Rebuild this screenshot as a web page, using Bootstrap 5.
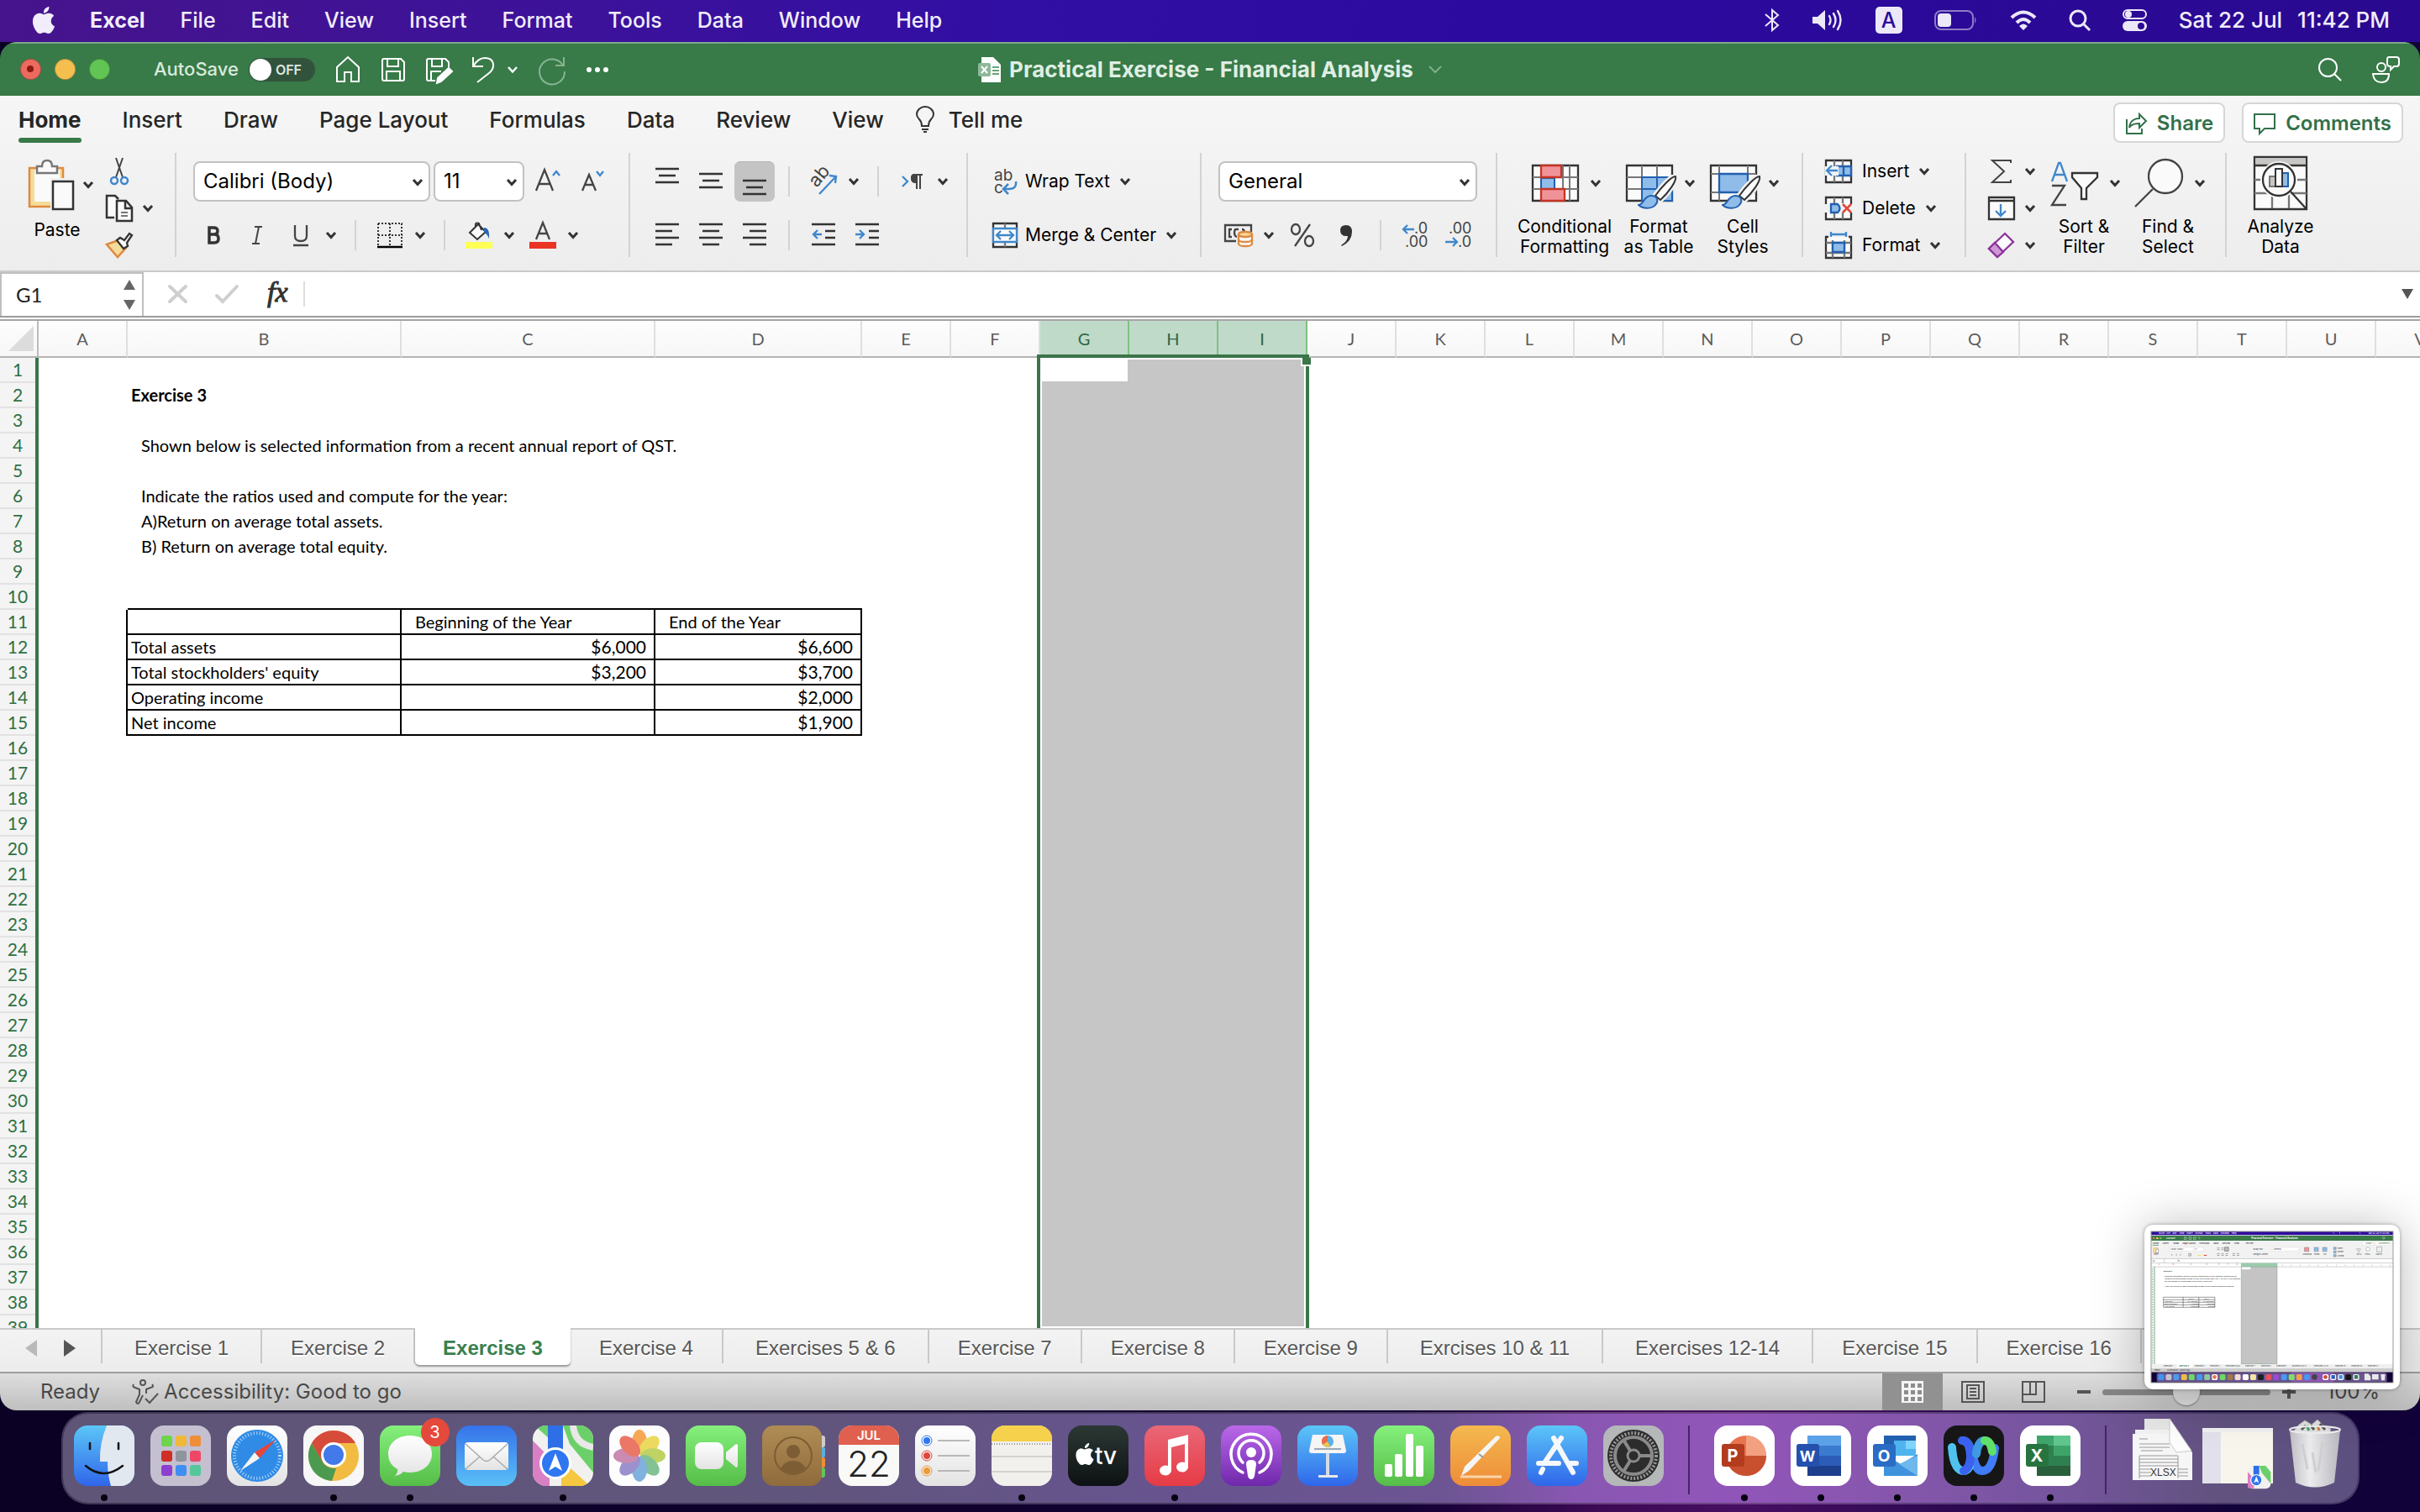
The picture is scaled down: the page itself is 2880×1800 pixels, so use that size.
<!DOCTYPE html>
<html lang="en">
<head>
<meta charset="utf-8">
<meta name="viewport" content="width=device-width, initial-scale=1">
<title>Practical Exercise - Financial Analysis</title>
<link href="https://cdn.jsdelivr.net/npm/bootstrap@5.3.0/dist/css/bootstrap.min.css" rel="stylesheet">
<style>
:root{--xl:#387a48;--ink:#262626;--ui:Inter,"Liberation Sans",sans-serif;--cell:Lato,"Liberation Sans",sans-serif}
body{height:100vh;overflow:hidden;font-family:var(--ui);color:var(--ink);background:linear-gradient(90deg,#0a0124 0,#120033 58%,#3d0a55 66%,#470f62 72%,#2a0850 82%,#12023a 92%,#12023a 100%)}
svg{display:block;flex:none;overflow:visible}
button,.btn{flex:none}
.side{flex:1}
/* system menu bar */
.menubar{height:50px;padding:0 36px;color:#f1edfa;font-size:25px;line-height:46px;font-weight:500;background:linear-gradient(90deg,#46148c 0,#3c129a 24%,#310ea4 42%,#2c0aa0 62%,#2a0990 100%)}
.menubar nav,.tray{height:48px}
.menubar a{color:inherit;text-decoration:none}
.menus{gap:42px;padding-left:39px}
.tray{gap:38px}
.clock{gap:18px;font-size:26px}
.key{width:32px;height:32px;border-radius:5px;background:#ece8f8;color:#2c0b98;line-height:32px;text-align:center}
/* window */
.win{border-radius:20px;overflow:hidden;min-height:0}
.titlebar{height:64px;background:var(--xl);border-top:2px solid #7ea98a;color:#fff;padding:0 24px}
.titlebar .btn{padding:0;border:0}
.titlebar .btn.light{width:25px;height:25px;border-radius:50%;border:1px solid rgba(0,0,0,.25)}
.red{background:#ec6a5e}.amber{background:#f4bf4f}.green{background:#61c554}
.doc{font-size:26px;font-weight:700;color:#dfeee3;gap:10px}
.asv{font-size:22px;font-weight:500;color:#d9eadd}
.tog{width:79px;height:28px;border-radius:14px;background:#31533b;position:relative;padding:0 0 0 32px;border:0;color:#dfe8e1;font-size:16px;font-weight:600;line-height:28px;text-align:left}
.tog:before{content:"";position:absolute;left:1px;top:1px;width:26px;height:26px;border-radius:50%;background:#fff}
.titlebar .tight{margin-left:-10px}
.tright{gap:36px}
.ribbon{background:linear-gradient(#f6f6f6,#ededed);border-bottom:2px solid #cacaca}
.tabs{height:68px;padding:0 20px 0 22px;font-size:26px;font-weight:500}
.tabs a{color:var(--ink);text-decoration:none;height:56px;line-height:58px;display:block;position:relative}
.tabs a.cur{font-weight:700}
.tabs a.cur:after{content:"";position:absolute;left:0;right:0;bottom:0;height:6px;border-radius:3px;background:var(--xl)}
.tabs a.tell{margin-left:-12px}
.rtabs{gap:49px;height:56px}
.acts{gap:20px}
.actbtn{height:48px;border:2px solid #d6d6d6;border-radius:8px;background:#fff;color:#33704a;font-weight:600;font-size:24px;line-height:24px;padding:2px 12px 0;gap:12px}
.tools{height:140px;font-size:21px}
.grp{height:124px;border-right:2px solid #d3d3d3;padding-left:20px;flex:none}
.grp:last-child{border:0}
.g-clip{width:210px}.g-font{width:540px}.g-align{width:402px}.g-wrap{width:278px}.g-num{width:352px}.g-style{width:364px}.g-cells{width:194px}.g-edit{width:310px}
.rows{display:flex;flex-direction:column;gap:16px;padding-top:10px}
.rows>div{display:flex;gap:4px;height:48px;align-items:center}
.stack{display:flex;flex-direction:column}
.stack>div{display:flex;height:44px;align-items:center}
.tool{width:48px;height:48px;padding:0;border:0;border-radius:7px;display:flex;align-items:center;justify-content:center}
.tool.nar{width:44px;height:44px}
.tool.on{background:#c4c4c4;border-top:1px solid #b2b2b2}
.drop{width:24px;height:44px;padding:0;border:0;display:flex;align-items:center;justify-content:center}
.tool+.drop{margin-left:-4px}
.stack .tool+.drop{margin-left:0}
.vsep{width:2px;height:36px;background:#d3d3d3;margin:0 12px}
.wide{display:flex;align-items:center;padding:0;border:0;height:44px;font-size:21px;line-height:26px;color:#000;gap:6px}
.wide .ic{width:42px;padding-left:6px;display:flex;justify-content:center}
.wide.sm .ic{width:44px;padding:0}
.big{width:96px;padding:0;border:0;font-size:21px;line-height:24px;color:#000;white-space:nowrap;display:flex;flex-direction:column;align-items:center;justify-content:flex-start}
.big.w1{width:120px}
.big.w2{width:88px}
.big .pic{height:80px;display:flex;align-items:center;gap:13px;padding-left:5px;padding-bottom:3px}
.big.w2 .pic{padding:0 0 3px}
.pick{height:48px;border:2px solid #c2c2c2;border-radius:8px;background:#fff;font-size:24px;color:#000;padding:0 10px;appearance:none}
.p-font{width:282px}.p-size{width:108px}.p-num{width:308px}
.pickbox{position:relative}
.pickbox svg{position:absolute;right:8px;top:20px;pointer-events:none}
/* formula bar */
.fbar{height:58px;background:#fff;border-bottom:2px solid #a5a5a5}
.fbar>div{height:54px;border-bottom:2px solid #9b9b9b}
.nbox{width:171px;border:2px solid #c0c0c0;border-bottom:0;height:52px;padding:0 8px 0 17px}
.nbox input{width:110px;border:0;background:none;padding:0;outline:0;font:24px/30px var(--cell);color:#222}
.fx{flex:1;border:0;outline:0;background:none;height:30px;border-left:2px solid #dedede;min-width:0}
/* grid */
.gridbox{flex:1;min-height:0;overflow:hidden;background:#fff;position:relative}
.cells{table-layout:fixed;width:0;border-collapse:separate;border-spacing:0;font:20px/26px var(--cell);color:#000}
.c0{width:46px}.c1{width:106px}.c2{width:326px}.c3{width:302px}.c4{width:246px}
.cells th{font-weight:400;text-align:center;padding:0}
.cells td{padding:0 4px 2px;white-space:nowrap;height:30px}
.cells thead th{height:44px;color:#5c5c5c;background:linear-gradient(#fdfdfd,#f7f7f7);border-bottom:2px solid #b4b4b4;border-right:2px solid #dfdfdf}
.cells thead th:first-child{border-right-color:#bcbcbc}
.cells thead th.sel{background:#bfdac9;color:#2d6641;border-right-color:#7fc181}
.cells tbody th{height:30px;padding-bottom:2px;font-size:21px;color:#2f7043;background:#f4f4f4;border-right:4px solid #3b7549;box-shadow:inset 0 -2px #e2e2e2}
.cells td.ind{padding-left:16px}
.cells td.n{text-align:right;padding-right:9px;font-size:21px}
.cells .bb{border-bottom:2px solid #000}
.cells .box td{border-bottom:2px solid #000;border-right:2px solid #000;padding-bottom:0}
.cells .box td:nth-child(2){border-bottom:0}
.cells .box td:last-child{border:0}
.range{position:absolute;left:1234px;top:40px;bottom:0;width:324px;border:4px solid #3b7549;border-bottom:0;background:#c6c6c6;box-shadow:inset 0 0 0 2px #fff}
.range .act{width:104px;height:28px;background:#fff}
.range .knob{position:absolute;right:-6px;top:0;width:12px;height:10px;background:#3b7549;border:solid #fff;border-width:0 0 2px 2px}
/* sheet tabs */
.sheets{height:54px;background:linear-gradient(#f3f3f3,#ececec);border-top:2px solid #c9c9c9;border-bottom:2px solid #9d9d9d;font:24px/44px "Liberation Sans",Arial,sans-serif}
.sheets .arr{width:122px;height:40px;border-right:2px solid #c9c9c9;display:flex;align-items:center;padding-left:30px;gap:32px;padding-top:4px}
.sheets .arr button{padding:0;border:0}
.sheets a{color:#585858;text-decoration:none;padding:0 34px;height:40px;border-right:2px solid #c9c9c9;white-space:nowrap;text-shadow:0 2px #fff}
.sheets a.w{padding:0 38px}
.sheets a.cur{color:#38804e;font-weight:700;background:#fff;padding:2px 33px 0;height:44px;margin-top:-2px;border-right:0;border-radius:0 0 5px 5px;box-shadow:0 2px 2px #999}
.status{height:44px;background:linear-gradient(#dedede,#bfbfbf);font-size:24px;line-height:42px;color:#484848;padding:0 48px}
.a11y{margin:0 6px 0 38px}
.vbtn{width:72px;height:44px;padding:0;border:0;border-radius:0;display:flex;align-items:center;justify-content:center}
.vbtn.on{background:#919191}
.zoomer{appearance:none;width:200px;height:7px;border-radius:4px;background:#858585;margin:0 14px}
.zoomer::-webkit-slider-thumb{appearance:none;width:32px;height:32px;border-radius:50%;background:#dcdcdc;box-shadow:0 1px 2px rgba(0,0,0,.4)}
.pct{padding-left:36px}
/* dock */
.dockrow{height:122px;padding-top:2px}
.dock{height:110px;border:2px solid rgba(255,255,255,.22);border-radius:32px;padding:14px 16px 0 13px;gap:19px;background:linear-gradient(90deg,#5f5577 0,#60557c 32%,#67548f 48%,#6c5592 60%,#8957b2 66%,#9155b9 73%,#8956b0 78%,#75559d 87%,#61527f 94%,#5c5080 100%) padding-box}
.dock button{width:72px;height:72px;padding:0;border:0;position:relative;display:block;background:none}
.dock .run:after{content:"";position:absolute;left:32px;bottom:-18px;width:8px;height:8px;border-radius:50%;background:#05020f}
.dock .bar{width:2px;height:82px;background:#43246b;margin:0 10px}
.nbadge{position:absolute;right:-11px;top:-9px;width:34px;height:34px;border-radius:50%;background:#e5493c;color:#fff;font-size:20px;line-height:34px;text-align:center}
.shot{position:absolute;right:24px;bottom:146px;width:304px;height:196px;background:#fff;border-radius:10px;padding:8px;box-shadow:0 0 4px rgba(0,0,0,.35),0 4px 60px rgba(0,0,0,.28)}
</style>
<script src="https://cdn.jsdelivr.net/npm/bootstrap@5.3.0/dist/js/bootstrap.bundle.min.js"></script>
</head>
<body class="d-flex flex-column">
<svg width="0" height="0" class="position-absolute" aria-hidden="true">
<defs>
<symbol id="chev" viewBox="0 0 14 10"><path d="M2 2l5 5.500L12 2" fill="none" stroke="#333" stroke-width="3"/></symbol>
<symbol id="brush" viewBox="0 0 48 42"><path d="M45 2c-5 0-17 13-24 23l6 5C36 22 47 7 45 2z" fill="#fafafa" stroke="#f1f1f1" stroke-width="7"/><path d="M45 2c-5 0-17 13-24 23l6 5C36 22 47 7 45 2z" fill="#fafafa" stroke="#333" stroke-width="2"/><path d="M1 36c6 0 6-11 15-11 8 0 9 7 5 11-4 5-15 5-20 0z" fill="#8fbce8" stroke="#2260b0" stroke-width="2"/></symbol>
<symbol id="apple" viewBox="0 0 16 16"><path d="M11.182.008C11.148-.03 9.923.023 8.857 1.18c-1.066 1.156-.902 2.482-.878 2.516s1.52.087 2.475-1.258.762-2.391.728-2.43m3.314 11.733c-.048-.096-2.325-1.234-2.113-3.422s1.675-2.789 1.698-2.854-.597-.79-1.254-1.157a3.7 3.7 0 0 0-1.563-.434c-.108-.003-.483-.095-1.254.116-.508.139-1.653.589-1.968.607-.316.018-1.256-.522-2.267-.665-.647-.125-1.333.131-1.824.328-.49.196-1.422.754-2.074 2.237-.652 1.482-.311 3.83-.067 4.56s.625 1.924 1.273 2.796c.576.984 1.34 1.667 1.659 1.899s1.219.386 1.843.067c.502-.308 1.408-.485 1.766-.472.357.013 1.061.154 1.782.539.571.197 1.111.115 1.652-.105.541-.221 1.324-1.059 2.238-2.758q.52-1.185.473-1.282"/></symbol>
<linearGradient id="gBlue" x2="0" y2="1"><stop stop-color="#5cc6f8"/><stop offset="1" stop-color="#2f66ea"/></linearGradient>
<linearGradient id="gMail" x2="0" y2="1"><stop stop-color="#3673ea"/><stop offset="1" stop-color="#5ac0f8"/></linearGradient>
<linearGradient id="gGreen" x2="0" y2="1"><stop stop-color="#85f07c"/><stop offset="1" stop-color="#55bd48"/></linearGradient>
<linearGradient id="gRed" x2="0" y2="1"><stop stop-color="#ea6777"/><stop offset="1" stop-color="#e63b45"/></linearGradient>
<linearGradient id="gPurple" x2="0" y2="1"><stop stop-color="#bb68ea"/><stop offset="1" stop-color="#6f28ab"/></linearGradient>
<linearGradient id="gOrange" x2="0" y2="1"><stop stop-color="#f4b94f"/><stop offset="1" stop-color="#ee8c38"/></linearGradient>
<linearGradient id="gWhite" x2="0" y2="1"><stop stop-color="#fff"/><stop offset="1" stop-color="#e3e3e3"/></linearGradient>
<linearGradient id="gDark" x2="0" y2="1"><stop stop-color="#2c3834"/><stop offset="1" stop-color="#0d1113"/></linearGradient>
<linearGradient id="gBrown" x2="0" y2="1"><stop stop-color="#b08c55"/><stop offset="1" stop-color="#8f6b3c"/></linearGradient>
<linearGradient id="gTrash" x2="1" y2="0"><stop stop-color="#c4c4c8"/><stop offset=".4" stop-color="#f3f3f3"/><stop offset="1" stop-color="#bdbdc2"/></linearGradient>
<clipPath id="tile"><rect width="72" height="72" rx="16"/></clipPath>
</defs>
</svg>

<header class="menubar d-flex align-items-start justify-content-between">
  <nav class="d-flex align-items-center" aria-label="System menu">
    <a href="#" aria-label="Apple menu"><svg width="32" height="32" fill="#f1edfa"><use href="#apple"/></svg></a>
    <div class="menus d-flex">
      <a href="#" class="fw-bold">Excel</a><a href="#">File</a><a href="#">Edit</a><a href="#">View</a><a href="#">Insert</a><a href="#">Format</a><a href="#">Tools</a><a href="#">Data</a><a href="#">Window</a><a href="#">Help</a>
    </div>
  </nav>
  <div class="tray d-flex align-items-center">
    <svg width="18" height="26" viewBox="0 0 18 26" fill="none" stroke="#ece8f8" stroke-width="2"><path d="M1 6l15 13-7 6V1l7 6L1 20"/></svg>
    <svg width="38" height="26" viewBox="0 0 38 26"><path d="M1 9h6l9-8v24l-9-8H1z" fill="#ece8f8"/><path d="M21 8q3 5 0 10M26 5q5 8 0 16M31 2q7 11 0 22" fill="none" stroke="#ece8f8" stroke-width="2.400" stroke-linecap="round"/></svg>
    <span class="key">A</span>
    <svg width="52" height="24" viewBox="0 0 52 24"><rect x="1" y="1" width="45" height="22" rx="7" fill="none" stroke="#8c7cc8" stroke-width="2"/><rect x="4" y="4" width="16" height="16" rx="4" fill="#ece8f8"/><path d="M48 8q3 4 0 8z" fill="#8c7cc8"/></svg>
    <svg width="32" height="24" viewBox="0 0 32 24" fill="none" stroke="#ece8f8" stroke-width="4"><path d="M2 9q14-13 28 0M8 15q8-8 16 0"/><path d="M16 24l-5-5q5-5 10 0z" fill="#ece8f8" stroke="none"/></svg>
    <svg width="26" height="26" viewBox="0 0 26 26" fill="none" stroke="#ece8f8" stroke-width="3"><circle cx="11" cy="11" r="9"/><path d="M17.500 17.500L25 25"/></svg>
    <svg width="29" height="26" viewBox="0 0 29 26"><rect x="1" y="1" width="27" height="10" rx="5" fill="none" stroke="#ece8f8" stroke-width="2"/><circle cx="7" cy="6" r="4" fill="#ece8f8"/><rect y="14" width="29" height="12" rx="6" fill="#ece8f8"/><circle cx="22" cy="20" r="4" fill="#2b0a94"/></svg>
    <div class="clock d-flex"><span>Sat 22 Jul</span><span>11:42 PM</span></div>
  </div>
</header>

<main class="win d-flex flex-column flex-grow-1">
  <div class="titlebar d-flex align-items-center">
    <div class="side d-flex align-items-center">
      <div class="d-flex gap-3 me-5">
        <button class="btn light red" aria-label="Close"><svg width="9" height="9" viewBox="0 0 9 9" class="m-auto"><circle cx="4" cy="4" r="4" fill="#8c1a10"/></svg></button>
        <button class="btn light amber" aria-label="Minimise"></button>
        <button class="btn light green" aria-label="Full screen"></button>
      </div>
      <span class="asv ms-1 me-2">AutoSave</span>
      <button class="tog ms-1 me-4" aria-label="AutoSave switch">OFF</button>
      <div class="d-flex align-items-center gap-4">
        <button class="btn" aria-label="Home"><svg width="30" height="32" viewBox="0 0 30 32" fill="none" stroke="#fff" stroke-width="2"><path d="M2 13L15 1l13 12v17h-9V19h-8v11H2z"/></svg></button>
        <button class="btn" aria-label="Save"><svg width="30" height="30" viewBox="0 0 30 30" fill="none" stroke="#fff" stroke-width="2"><path d="M2 4q0-2 2-2h20l4 4v20q0 2-2 2H4q-2 0-2-2zM8 2v9h13V2M7 28V17h16v11"/></svg></button>
        <button class="btn" aria-label="Save as"><svg width="30" height="30" viewBox="0 0 30 30" fill="none" stroke="#fff" stroke-width="2"><path d="M27 12V6l-4-4H3Q1 2 1 4v22q0 2 2 2h8M7 2v9h12V2M6 28V17h12"/><path d="M27 13l4 4-13 12-5 2 1-6z" fill="#fff"/></svg></button>
        <button class="btn" aria-label="Undo"><svg width="28" height="32" viewBox="0 0 28 32" fill="none" stroke="#fff" stroke-width="2"><path d="M2 1v11h12M2 12Q8 2 16 2q10 0 10 9 0 5-5 9L7 31"/></svg></button>
        <button class="btn tight" aria-label="Undo list"><svg width="14" height="10" viewBox="0 0 14 10"><path d="M2 2l5 5.500L12 2" fill="none" stroke="#fff" stroke-width="2.500"/></svg></button>
        <button class="btn" aria-label="Redo"><svg width="32" height="32" viewBox="0 0 32 32" fill="none" stroke="#86b492" stroke-width="2"><path d="M30 1v10H20M29 11A15 15 0 1 0 31 18"/></svg></button>
        <button class="btn" aria-label="More"><svg width="28" height="6" viewBox="0 0 28 6" fill="#fff"><circle cx="4" cy="3" r="3"/><circle cx="14" cy="3" r="3"/><circle cx="24" cy="3" r="3"/></svg></button>
      </div>
    </div>
    <div class="doc d-flex align-items-center">
      <svg width="27" height="30" viewBox="0 0 27 30"><path d="M4 0h14l9 9v21H4z" fill="#fff"/><path d="M17 12h8M17 16h8M17 20h8" stroke="#6ba37b" stroke-width="2"/><rect y="7" width="15" height="16" rx="2" fill="#8db899"/><path d="M4 11l7 8M11 11l-7 8" stroke="#fff" stroke-width="2"/></svg>
      <span>Practical Exercise - Financial Analysis</span>
      <svg width="16" height="10" viewBox="0 0 16 10" class="ms-2"><path d="M1 1l7 7 7-7" fill="none" stroke="#7fb08c" stroke-width="2"/></svg>
    </div>
    <div class="side tright d-flex align-items-center justify-content-end">
      <button class="btn" aria-label="Search"><svg width="28" height="28" viewBox="0 0 28 28" fill="none" stroke="#fff" stroke-width="2"><circle cx="11.500" cy="11.500" r="10.500"/><path d="M19 19l8 8"/></svg></button>
      <button class="btn" aria-label="Share presence"><svg width="33" height="32" viewBox="0 0 33 32" fill="none" stroke="#fff" stroke-width="2"><circle cx="11" cy="13" r="5"/><path d="M1 21h19q0 10-9 10T1 21zM20 1h9q3 0 3 3v5q0 3-3 3h-3l-4 4v-4q-4 0-4-3V4q0-3 2-3z"/></svg></button>
    </div>
  </div>

  <div class="ribbon">
    <div class="tabs d-flex justify-content-between">
      <div class="rtabs d-flex">
        <a href="#" class="cur">Home</a><a href="#">Insert</a><a href="#">Draw</a><a href="#">Page Layout</a><a href="#">Formulas</a><a href="#">Data</a><a href="#">Review</a><a href="#">View</a>
        <a href="#" class="tell d-flex gap-3"><svg width="24" height="32" viewBox="0 0 24 32" class="align-self-center" fill="none" stroke="#333" stroke-width="2"><path d="M8 24q0-5-3-8-3-3-3-6a10 9 0 0 1 20 0q0 3-3 6-3 3-3 8zM8 28h8M10 31h4"/></svg><span>Tell me</span></a>
      </div>
      <div class="acts d-flex pt-2">
        <button class="actbtn d-flex align-items-center"><svg width="26" height="26" viewBox="0 0 26 26" fill="none" stroke="#33704a" stroke-width="2"><path d="M2 8v17h18v-6M5 18q1-11 12-11V2l8 8-8 8v-5Q8 13 5 18z"/></svg>Share</button>
        <button class="actbtn d-flex align-items-center"><svg width="26" height="26" viewBox="0 0 26 26" fill="none" stroke="#33704a" stroke-width="2"><path d="M1 2h24v17H13l-6 6v-6H1z"/></svg>Comments</button>
      </div>
    </div>

    <div class="tools d-flex">
      <div class="grp g-clip d-flex">
        <button class="btn big"><span class="pic"><svg width="56" height="60" viewBox="0 0 56 60"><path d="M6 10h40v46H6z" fill="#f5dc98" stroke="#de8a41" stroke-width="2.500"/><path d="M12 12h30v38H12z" fill="#fafafa"/><path d="M15 8h6q0-7 6-7t6 7h6v8H15z" fill="#fafafa" stroke="#777" stroke-width="2.500"/><path d="M31 22h28v38H31z" fill="#f1f1f1"/><path d="M34 26h24v33H34z" fill="#fafafa" stroke="#333" stroke-width="2.500"/></svg><svg width="14" height="10"><use href="#chev"/></svg></span>Paste</button>
        <div class="stack ms-1">
          <div><button class="btn tool nar" aria-label="Cut"><svg width="22" height="32" viewBox="0 0 22 32" fill="none" stroke="#444" stroke-width="2"><path d="M7 0l8 23M15 0L7 23"/><g stroke="#3f87cc" stroke-width="2.500"><circle cx="5" cy="27" r="4"/><circle cx="17" cy="27" r="4"/></g></svg></button></div>
          <div><button class="btn tool nar" aria-label="Copy"><svg width="32" height="32" viewBox="0 0 32 32" fill="#fafafa" stroke="#333" stroke-width="2.500"><path d="M10 27H1V1h10l4 4"/><path d="M13 7h11l7 8v16H13zM23 7v9h8"/><path d="M18 21h8M18 25h8" stroke="#777" stroke-width="2"/></svg></button><button class="btn drop" aria-label="Copy options"><svg width="14" height="10"><use href="#chev"/></svg></button></div>
          <div><button class="btn tool nar" aria-label="Format painter"><svg width="32" height="30" viewBox="0 0 32 30"><path d="M1 14l14-5 9 9-10 11z" fill="#f5dc98" stroke="#de8a41" stroke-width="2.500"/><path d="M13 9l4-3 5 3 6-8 3 2-6 9 1 4-5 3z" fill="#fafafa" stroke="#333" stroke-width="2.300"/></svg></button></div>
        </div>
      </div>

      <div class="grp g-font"><div class="rows">
        <div>
          <span class="pickbox"><select class="pick p-font" aria-label="Font"><option>Calibri (Body)</option></select><svg width="14" height="10"><use href="#chev"/></svg></span>
          <span class="pickbox"><select class="pick p-size" aria-label="Font size"><option>11</option></select><svg width="14" height="10"><use href="#chev"/></svg></span>
          <button class="btn tool" aria-label="Grow font"><svg width="30" height="30" viewBox="0 0 30 30" fill="none" stroke="#444" stroke-width="2.300"><path d="M1 26L11 1l10 25M4.500 18h13"/><path d="M21 8l4-5 4 5" stroke="#3f87cc"/></svg></button>
          <button class="btn tool" aria-label="Shrink font"><svg width="30" height="30" viewBox="0 0 30 30" fill="none" stroke="#444" stroke-width="2.300"><path d="M4 26l8-19 8 19M7 19h10"/><path d="M21 3l4 5 4-5" stroke="#3f87cc"/></svg></button>
        </div>
        <div>
          <button class="btn tool" aria-label="Bold"><svg width="18" height="22" viewBox="0 0 18 22" fill="none" stroke="#333" stroke-width="3.500"><path d="M4 2h5q5 0 5 4t-5 4H4zM4 10h6q5 0 5 5t-5 5H4z"/></svg></button>
          <button class="btn tool" aria-label="Italic"><svg width="14" height="22" viewBox="0 0 14 22" fill="none" stroke="#444" stroke-width="2"><path d="M4 1h9M1 21h9M9 1L5 21"/></svg></button>
          <button class="btn tool" aria-label="Underline"><svg width="18" height="26" viewBox="0 0 18 26" fill="none" stroke="#444" stroke-width="2.300"><path d="M2 1v13q0 6 7 6t7-6V1M0 25h18"/></svg></button>
          <button class="btn drop" aria-label="Underline options"><svg width="14" height="10"><use href="#chev"/></svg></button>
          <span class="vsep"></span>
          <button class="btn tool" aria-label="Borders"><svg width="30" height="30" viewBox="0 0 30 30" fill="none" stroke="#333" stroke-width="2"><path d="M1 1h29M1 15h29M1 1v26M15 1v26M29 1v26" stroke-dasharray="2 2"/><path d="M0 29h30" stroke="#000" stroke-width="2.500"/></svg></button>
          <button class="btn drop" aria-label="Border options"><svg width="14" height="10"><use href="#chev"/></svg></button>
          <span class="vsep"></span>
          <button class="btn tool" aria-label="Fill colour"><svg width="32" height="32" viewBox="0 0 32 32"><path d="M5 13L15 3l9 9-10 9zM12 5q-1-5 4-3l3 8" fill="#fafafa" stroke="#333" stroke-width="2"/><path d="M22 7q7 0 6 13-2-5-6-8z" fill="#2767b8"/><path d="M0 24h32v8H0z" fill="#ffff54"/></svg></button>
          <button class="btn drop" aria-label="Fill options"><svg width="14" height="10"><use href="#chev"/></svg></button>
          <button class="btn tool" aria-label="Font colour"><svg width="32" height="32" viewBox="0 0 32 32"><path d="M8 21l8-20 8 20M11 14h10" fill="none" stroke="#444" stroke-width="2.300"/><path d="M0 24h32v8H0z" fill="#ea3323"/></svg></button>
          <button class="btn drop" aria-label="Font colour options"><svg width="14" height="10"><use href="#chev"/></svg></button>
        </div>
      </div></div>

      <div class="grp g-align"><div class="rows">
        <div>
          <button class="btn tool" aria-label="Align top"><svg width="28" height="32" viewBox="0 0 28 32" stroke="#333" stroke-width="2.300"><path d="M0 1h28M4 9h20M0 17h28"/></svg></button>
          <button class="btn tool" aria-label="Align middle"><svg width="28" height="32" viewBox="0 0 28 32" stroke="#333" stroke-width="2.300"><path d="M0 7h28M4 15h20M0 23h28"/></svg></button>
          <button class="btn tool on" aria-label="Align bottom"><svg width="28" height="32" viewBox="0 0 28 32" stroke="#333" stroke-width="2.300"><path d="M0 15h28M4 23h20M0 31h28"/></svg></button>
          <span class="vsep"></span>
          <button class="btn tool" aria-label="Orientation"><svg width="34" height="34" viewBox="0 0 34 34"><text transform="translate(9 25) rotate(-50)" font-family="Inter" font-size="22" fill="#444">ab</text><path d="M12 32L32 11M24 10l8 1-1 8" fill="none" stroke="#3f87cc" stroke-width="2.300"/></svg></button>
          <button class="btn drop" aria-label="Orientation options"><svg width="14" height="10"><use href="#chev"/></svg></button>
          <span class="vsep"></span>
          <button class="btn tool" aria-label="Text direction"><svg width="26" height="18" viewBox="0 0 26 18" fill="none" stroke="#444" stroke-width="2"><path d="M1 3l6 6-6 6" stroke="#3f87cc" stroke-width="2.300"/><path d="M25 1h-9q-4 0-4 4.500T17 10M18 0v18M22 0v18"/><path d="M17 1h-2q-3 0-3 4t5 5z" fill="#444"/></svg></button>
          <button class="btn drop" aria-label="Direction options"><svg width="14" height="10"><use href="#chev"/></svg></button>
        </div>
        <div>
          <button class="btn tool" aria-label="Align left"><svg width="28" height="27" viewBox="0 0 28 27" stroke="#333" stroke-width="2.300"><path d="M0 1h28M0 9h20M0 17h28M0 25h20"/></svg></button>
          <button class="btn tool" aria-label="Center"><svg width="28" height="27" viewBox="0 0 28 27" stroke="#333" stroke-width="2.300"><path d="M0 1h28M4 9h20M0 17h28M4 25h20"/></svg></button>
          <button class="btn tool" aria-label="Align right"><svg width="28" height="27" viewBox="0 0 28 27" stroke="#333" stroke-width="2.300"><path d="M0 1h28M8 9h20M0 17h28M8 25h20"/></svg></button>
          <span class="vsep"></span>
          <button class="btn tool" aria-label="Decrease indent"><svg width="28" height="27" viewBox="0 0 28 27" stroke="#333" stroke-width="2.300" fill="none"><path d="M0 1h28M16 9h12M16 17h12M0 25h28"/><path d="M12 13H2M7 8l-5 5 5 5" stroke="#3f87cc"/></svg></button>
          <button class="btn tool" aria-label="Increase indent"><svg width="28" height="27" viewBox="0 0 28 27" stroke="#333" stroke-width="2.300" fill="none"><path d="M0 1h28M16 9h12M16 17h12M0 25h28"/><path d="M0 13h10M5 8l5 5-5 5" stroke="#3f87cc"/></svg></button>
        </div>
      </div></div>

      <div class="grp g-wrap"><div class="rows">
        <div><button class="btn wide"><span class="ic"><svg width="28" height="32" viewBox="0 0 28 32"><text font-family="Inter" font-size="19" fill="#444"><tspan x="1" y="15">ab</tspan><tspan x="1" y="30">c</tspan></text><path d="M27 16q1 9-8 9h-6M18 19l-6 6 6 6" fill="none" stroke="#3f87cc" stroke-width="2.500"/></svg></span><span>Wrap Text</span><span class="drop"><svg width="14" height="10"><use href="#chev"/></svg></span></button></div>
        <div><button class="btn wide"><span class="ic"><svg width="30" height="30" viewBox="0 0 30 30" fill="#fafafa" stroke="#333" stroke-width="2.300"><path d="M1 1h28v28H1z"/><path d="M15 1v28" stroke="#777"/><path d="M1 7h28v16H1zM6 15h18M10 10l-5 5 5 5M20 10l5 5-5 5" stroke="#3f87cc"/></svg></span><span>Merge &amp; Center</span><span class="drop"><svg width="14" height="10"><use href="#chev"/></svg></span></button></div>
      </div></div>

      <div class="grp g-num"><div class="rows">
        <div><span class="pickbox"><select class="pick p-num" aria-label="Number format"><option>General</option></select><svg width="14" height="10"><use href="#chev"/></svg></span></div>
        <div>
          <button class="btn tool" aria-label="Currency"><svg width="34" height="28" viewBox="0 0 34 28" fill="none" stroke="#444" stroke-width="2.300"><path d="M14 21H1V2h31v8"/><path d="M9 7H6v9h3M17 7h-3q-2 0-2 4t3 5M21 7q3 0 3 4" /><path d="M17 13v11q0 3 8 3t8-3V13" fill="#fafafa" stroke="#de8a41"/><ellipse cx="25" cy="13" rx="8" ry="3" fill="#f5dc98" stroke="#de8a41"/><path d="M17 19q0 3 8 3t8-3" stroke="#de8a41"/></svg></button>
          <button class="btn drop" aria-label="Currency options"><svg width="14" height="10"><use href="#chev"/></svg></button>
          <button class="btn tool" aria-label="Percent"><svg width="30" height="28" viewBox="0 0 30 28" fill="none" stroke="#444" stroke-width="2.300"><ellipse cx="7" cy="7" rx="5" ry="6"/><ellipse cx="23" cy="21" rx="5" ry="6"/><path d="M24 1L6 27"/></svg></button>
          <button class="btn tool" aria-label="Comma style"><svg width="16" height="26" viewBox="0 0 16 26"><path d="M2 25q8-5 8-11-9 1-9-7 0-6 7-6t7 8q0 11-12 17z" fill="#333"/></svg></button>
          <span class="vsep"></span>
          <button class="btn tool" aria-label="Increase decimal"><svg width="32" height="32" viewBox="0 0 32 32"><text font-family="Inter" font-size="18" fill="#444"><tspan x="15" y="14">.0</tspan><tspan x="4" y="30">.00</tspan></text><path d="M15 9H2M7 4L2 9l5 5" fill="none" stroke="#3f87cc" stroke-width="2.300"/></svg></button>
          <button class="btn tool" aria-label="Decrease decimal"><svg width="32" height="32" viewBox="0 0 32 32"><text font-family="Inter" font-size="18" fill="#444"><tspan x="4" y="14">.00</tspan><tspan x="15" y="30">.0</tspan></text><path d="M0 24h14M9 19l5 5-5 5" fill="none" stroke="#3f87cc" stroke-width="2.300"/></svg></button>
        </div>
      </div></div>

      <div class="grp g-style d-flex gap-1">
        <button class="btn big w1"><span class="pic"><svg width="56" height="56" viewBox="0 0 56 56"><path d="M1 7h54v42H1z" fill="#fafafa" stroke="#333" stroke-width="2.300"/><path d="M1 21h54M1 35h54M45 7v42M37 7v42" stroke="#777" stroke-width="2" fill="none"/><path d="M11 22h16v13H11z" fill="#8fbce8" stroke="#2260b0" stroke-width="2"/><path d="M11 7h24v14H11zM11 35h28v14H11z" fill="#f09399" stroke="#c43524" stroke-width="2.300"/></svg><svg width="14" height="10"><use href="#chev"/></svg></span>Conditional<br>Formatting</button>
        <button class="btn big"><span class="pic"><svg width="56" height="56" viewBox="0 0 56 56"><path d="M1 7h54v42H1z" fill="#fafafa" stroke="#333" stroke-width="2.300"/><path d="M1 21h54M1 35h54M19 7v42M37 7v42" stroke="#777" stroke-width="2"/><path d="M19 21h36v28H19zM19 35h36M37 21v28" fill="#8fbce8" stroke="#2260b0" stroke-width="2"/><use href="#brush" x="14" y="18" width="48" height="42"/></svg><svg width="14" height="10"><use href="#chev"/></svg></span>Format<br>as Table</button>
        <button class="btn big"><span class="pic"><svg width="56" height="56" viewBox="0 0 56 56"><path d="M1 7h54v42H1z" fill="#fafafa" stroke="#333" stroke-width="2.300"/><path d="M1 17h54M1 39h54M11 7v42M45 7v42" stroke="#777" stroke-width="2"/><path d="M11 17h34v22H11z" fill="#8fbce8" stroke="#2260b0" stroke-width="2.300"/><use href="#brush" x="14" y="18" width="48" height="42"/></svg><svg width="14" height="10"><use href="#chev"/></svg></span>Cell<br>Styles</button>
      </div>

      <div class="grp g-cells"><div class="stack">
        <div><button class="btn wide sm"><span class="ic"><svg width="32" height="28" viewBox="0 0 32 28" fill="#fafafa" stroke="#333" stroke-width="2.300"><path d="M1 1h30v26H1z"/><path d="M11 1v26M21 1v26" stroke="#777"/><path d="M14 8h17v11H14zM22 8v11" fill="#8fbce8" stroke="#2260b0"/><path d="M0 8h16v11H0z" stroke="none" fill="#f3f3f3"/><path d="M15 13H2M8 7l-6 6 6 6" fill="none" stroke="#3f87cc"/></svg></span>Insert<span class="drop"><svg width="14" height="10"><use href="#chev"/></svg></span></button></div>
        <div><button class="btn wide sm"><span class="ic"><svg width="32" height="28" viewBox="0 0 32 28" fill="#fafafa" stroke="#333" stroke-width="2.300"><path d="M1 9V1h30v8M1 19v8h30v-8"/><path d="M11 1v7M21 1v7M11 19v8M21 19v8" stroke="#777"/><path d="M7 9h8q5 5 0 10H7z" fill="#8fbce8" stroke="#2260b0"/><path d="M21 9l10 10M31 9L21 19" stroke="#e0483c" stroke-width="2.500"/></svg></span>Delete<span class="drop"><svg width="14" height="10"><use href="#chev"/></svg></span></button></div>
        <div><button class="btn wide sm"><span class="ic"><svg width="32" height="32" viewBox="0 0 32 32" fill="#fafafa" stroke="#333" stroke-width="2.300"><path d="M4 6H1v25h30V6h-3"/><path d="M9 10v21M23 10v21M1 13h30M1 25h30" stroke="#777"/><path d="M9 13h14v11H9z" fill="#8fbce8" stroke="#2260b0"/><path d="M7 3h18M7 0v6M25 0v6" stroke="#3f87cc"/></svg></span>Format<span class="drop"><svg width="14" height="10"><use href="#chev"/></svg></span></button></div>
      </div></div>

      <div class="grp g-edit d-flex gap-1">
        <div class="stack">
          <div><button class="btn tool nar" aria-label="AutoSum"><svg width="24" height="28" viewBox="0 0 24 28" fill="none" stroke="#444" stroke-width="2"><path d="M23 4V1H1l14 13L1 27h22v-3"/></svg></button><button class="btn drop" aria-label="AutoSum options"><svg width="14" height="10"><use href="#chev"/></svg></button></div>
          <div><button class="btn tool nar" aria-label="Fill"><svg width="32" height="28" viewBox="0 0 32 28" fill="#fafafa" stroke="#333" stroke-width="2.300"><path d="M1 1h30v26H1zM1 5h30"/><path d="M15 9v13M9 17l6 6 6-6" fill="none" stroke="#3f87cc"/></svg></button><button class="btn drop" aria-label="Fill options"><svg width="14" height="10"><use href="#chev"/></svg></button></div>
          <div><button class="btn tool nar" aria-label="Clear"><svg width="32" height="32" viewBox="0 0 32 32" stroke="#8b339b" stroke-width="2.300"><path d="M20 2l10 10-19 18L1 20z" fill="#fafafa"/><path d="M8 13l10 11-7 6L1 20z" fill="#cf97d6"/></svg></button><button class="btn drop" aria-label="Clear options"><svg width="14" height="10"><use href="#chev"/></svg></button></div>
        </div>
        <button class="btn big"><span class="pic"><svg width="56" height="56" viewBox="0 0 56 56" fill="none" stroke-width="2.300"><path d="M1 26l8-22h2l8 22M4 18h12" stroke="#3f87cc"/><path d="M1 31h15L1 54h17" stroke="#444"/><path d="M25 16h30v5L42 34v13h-6V34L25 21z" fill="#fafafa" stroke="#333"/></svg><svg width="14" height="10"><use href="#chev"/></svg></span>Sort &amp;<br>Filter</button>
        <button class="btn big"><span class="pic"><svg width="58" height="58" viewBox="0 0 58 58" fill="#fafafa" stroke="#444" stroke-width="2.300"><circle cx="37" cy="21" r="20"/><path d="M22 36L1 57"/></svg><svg width="14" height="10"><use href="#chev"/></svg></span>Find &amp;<br>Select</button>
      </div>

      <div class="grp d-flex">
        <button class="btn big w2"><span class="pic"><svg width="64" height="64" viewBox="0 0 64 64" fill="#fafafa" stroke="#333" stroke-width="2.300"><path d="M1 1h62v62H1z"/><path d="M2 2h60v8H2z" fill="#c8c6c4" stroke="none"/><path d="M1 11h62"/><path d="M1 28h10M52 28h11M1 44h62M22 44v18M42 44v18" stroke="#777"/><circle cx="30" cy="28" r="22" stroke="none"/><circle cx="30" cy="28" r="19"/><path d="M19 24h7v12h-7z" fill="#c8c6c4" stroke="#777" stroke-width="2"/><path d="M34 20h7v16h-7z" fill="#8fbce8" stroke="#2260b0" stroke-width="2"/><path d="M26 15h8v21h-8z" stroke-width="2"/><path d="M44 42l19 21"/></svg></span>Analyze<br>Data</button>
      </div>
    </div>
  </div>

  <div class="fbar"><div class="d-flex align-items-center">
    <div class="nbox d-flex align-items-center justify-content-between align-self-start"><input value="G1" aria-label="Name box"><svg width="14" height="36" viewBox="0 0 14 36" fill="#666"><path d="M0 12L7 0l7 12zM0 24l7 12 7-12z"/></svg></div>
    <svg class="ms-4 me-4" width="32" height="24" viewBox="0 0 32 24"><path d="M7 3l19 18M26 3L7 21" stroke="#cfcfcf" stroke-width="4" stroke-linecap="round"/></svg>
    <svg class="ms-1" width="30" height="24" viewBox="0 0 30 24"><path d="M3 14l7 7L27 3" fill="none" stroke="#cfcfcf" stroke-width="4" stroke-linecap="round"/></svg>
    <svg class="ms-4 me-3" width="36" height="34" viewBox="0 0 36 34"><text x="9" y="26" font-family="Liberation Serif" font-style="italic" font-size="34" fill="#333" stroke="#333">fx</text></svg>
    <input class="fx" aria-label="Formula">
    <svg class="me-2" width="14" height="12" viewBox="0 0 14 12"><path d="M0 0h14L7 12z" fill="#555"/></svg>
  </div></div>

  <div class="gridbox">
    <table class="cells">
      <colgroup><col class="c0"><col class="c1"><col class="c2"><col class="c3"><col class="c4"><col span="18" class="c1"></colgroup>
      <thead><tr><th><svg width="30" height="30" viewBox="0 0 30 30" class="ms-auto me-1"><path d="M30 0v30H0z" fill="#dcdcdc"/></svg></th><th>A</th><th>B</th><th>C</th><th>D</th><th>E</th><th>F</th><th class="sel">G</th><th class="sel">H</th><th class="sel">I</th><th>J</th><th>K</th><th>L</th><th>M</th><th>N</th><th>O</th><th>P</th><th>Q</th><th>R</th><th>S</th><th>T</th><th>U</th><th>V</th></tr></thead>
      <tbody>
        <tr><th>1</th><td></td></tr>
        <tr><th>2</th><td></td><td class="fw-bold">Exercise 3</td></tr>
        <tr><th>3</th><td></td></tr>
        <tr><th>4</th><td></td><td class="ind" colspan="3">Shown below is selected information from a recent annual report of QST.</td></tr>
        <tr><th>5</th><td></td></tr>
        <tr><th>6</th><td></td><td class="ind" colspan="3">Indicate the ratios used and compute for the year:</td></tr>
        <tr><th>7</th><td></td><td class="ind" colspan="3">A)Return on average total assets.</td></tr>
        <tr><th>8</th><td></td><td class="ind" colspan="3">B) Return on average total equity.</td></tr>
        <tr><th>9</th><td></td></tr>
        <tr><th>10</th><td></td><td class="bb" colspan="3"></td></tr>
        <tr class="box"><th>11</th><td></td><td></td><td class="ind">Beginning of the Year</td><td class="ind">End of the Year</td><td></td></tr>
        <tr class="box"><th>12</th><td></td><td>Total assets</td><td class="n">$6,000</td><td class="n">$6,600</td><td></td></tr>
        <tr class="box"><th>13</th><td></td><td>Total stockholders' equity</td><td class="n">$3,200</td><td class="n">$3,700</td><td></td></tr>
        <tr class="box"><th>14</th><td></td><td>Operating income</td><td></td><td class="n">$2,000</td><td></td></tr>
        <tr class="box"><th>15</th><td></td><td>Net income</td><td></td><td class="n">$1,900</td><td></td></tr>
        <tr><th>16</th></tr><tr><th>17</th></tr><tr><th>18</th></tr><tr><th>19</th></tr><tr><th>20</th></tr><tr><th>21</th></tr><tr><th>22</th></tr><tr><th>23</th></tr><tr><th>24</th></tr><tr><th>25</th></tr><tr><th>26</th></tr><tr><th>27</th></tr><tr><th>28</th></tr><tr><th>29</th></tr><tr><th>30</th></tr><tr><th>31</th></tr><tr><th>32</th></tr><tr><th>33</th></tr><tr><th>34</th></tr><tr><th>35</th></tr><tr><th>36</th></tr><tr><th>37</th></tr><tr><th>38</th></tr><tr><th>39</th></tr>
      </tbody>
    </table>
    <div class="range"><div class="act"></div><div class="knob"></div></div>
  </div>

  <nav class="sheets d-flex" aria-label="Sheets">
    <div class="arr"><button class="btn" aria-label="Previous sheet"><svg width="14" height="20" viewBox="0 0 14 20"><path d="M14 0v20L0 10z" fill="#b9b9b9"/></svg></button><button class="btn" aria-label="Next sheet"><svg width="14" height="20" viewBox="0 0 14 20"><path d="M0 0v20l14-10z" fill="#555"/></svg></button></div>
    <a href="#" class="w">Exercise 1</a><a href="#">Exercise 2</a><a href="#" class="cur">Exercise 3</a><a href="#">Exercise 4</a><a href="#" class="w">Exercises 5 &amp; 6</a><a href="#">Exercise 7</a><a href="#">Exercise 8</a><a href="#">Exercise 9</a><a href="#" class="w">Exrcises 10 &amp; 11</a><a href="#" class="w">Exercises 12-14</a><a href="#">Exercise 15</a><a href="#">Exercise 16</a>
  </nav>

  <div class="status d-flex justify-content-between">
    <div class="d-flex align-items-center"><span>Ready</span>
      <svg class="a11y" width="32" height="30" viewBox="0 0 32 30" fill="none" stroke="#555" stroke-width="2"><circle cx="13" cy="4" r="3"/><path d="M2 6q-2 3 2 4l5 2v6L5 27q2 4 4 0l4-8M24 6q3 3-2 4l-5 2v5M16 23l5 5L31 17"/></svg>
      <span>Accessibility: Good to go</span></div>
    <div class="d-flex align-items-center">
      <button class="btn vbtn on" aria-label="Normal view"><svg width="26" height="26" viewBox="0 0 26 26"><path d="M0 0h26v26H0z" fill="#f5f5f5"/><path d="M3 3h5v5H3zM11 3h5v5h-5zM19 3h5v5h-5zM3 11h5v5H3zM11 11h5v5h-5zM19 11h5v5h-5zM3 19h5v5H3zM11 19h5v5h-5zM19 19h5v5h-5z" fill="#8d8d8d"/></svg></button>
      <button class="btn vbtn" aria-label="Page layout"><svg width="28" height="26" viewBox="0 0 28 26" fill="none" stroke="#555" stroke-width="2"><path d="M1 1h26v24H1zM7 5h14v16H7zM10 9h8M10 13h8M10 17h8"/></svg></button>
      <button class="btn vbtn" aria-label="Page break"><svg width="28" height="26" viewBox="0 0 28 26" fill="none" stroke="#555" stroke-width="2"><path d="M1 1h26v24H1zM1 16h16V1M10 1v15"/></svg></button>
      <svg class="ms-3" width="16" height="4" viewBox="0 0 16 4"><path d="M0 0h16v4H0z" fill="#555"/></svg>
      <input type="range" class="zoomer" aria-label="Zoom" min="10" max="190" value="100">
      <svg width="16" height="16" viewBox="0 0 16 16"><path d="M6 0h4v6h6v4h-6v6H6v-6H0V6h6z" fill="#555"/></svg>
      <span class="pct">100%</span>
    </div>
  </div>
</main>

<footer class="dockrow d-flex justify-content-center">
  <div class="dock d-flex">
    <button class="run" aria-label="Finder"><svg width="72" height="72" viewBox="0 0 72 72"><g clip-path="url(#tile)"><path d="M0 0h72v72H0z" fill="url(#gBlue)"/><path d="M39 0q-9 22-8 43h9q0 16 4 29h28V0z" fill="#e2e8f0"/></g><path d="M19 21v7M53 21v7M14 48q21 18 44 0" fill="none" stroke="#111" stroke-width="2.500" stroke-linecap="round"/></svg></button>
    <button aria-label="Launchpad"><svg width="72" height="72" viewBox="0 0 72 72"><rect width="72" height="72" rx="16" fill="#c4c0d0"/><rect x="13" y="12" width="13" height="13" rx="3" fill="#6dd44c"/><rect x="30" y="12" width="13" height="13" rx="3" fill="#f0b838"/><rect x="47" y="12" width="13" height="13" rx="3" fill="#ee8e38"/><rect x="13" y="30" width="13" height="13" rx="3" fill="#cf2f26"/><rect x="30" y="30" width="13" height="13" rx="3" fill="#8f959c"/><rect x="47" y="30" width="13" height="13" rx="3" fill="#ee4866"/><rect x="13" y="47" width="13" height="13" rx="3" fill="#8d3fd0"/><rect x="30" y="47" width="13" height="13" rx="3" fill="#3f8ef2"/><rect x="47" y="47" width="13" height="13" rx="3" fill="#55c79b"/></svg></button>
    <button aria-label="Safari"><svg width="72" height="72" viewBox="0 0 72 72"><rect width="72" height="72" rx="16" fill="url(#gWhite)"/><circle cx="36" cy="36" r="31" fill="#2f8be6"/><circle cx="36" cy="36" r="27" fill="none" stroke="#b8dcf8" stroke-width="4" stroke-dasharray="1 2.500"/><path d="M58 17L33 32l6 7z" fill="#e6463a"/><path d="M16 54l17-22 6 7z" fill="#f4f4f4"/></svg></button>
    <button class="run" aria-label="Chrome"><svg width="72" height="72" viewBox="0 0 72 72"><rect width="72" height="72" rx="16" fill="#f7f7f7"/><circle cx="36" cy="36" r="30" fill="#f2bc42"/><path d="M10 21A30 30 0 0 1 62 21H36L23 44z" fill="#d74b3b"/><path d="M10 21l13 23q6 8 16 7l-5 15A30 30 0 0 1 10 21z" fill="#4b9a50"/><circle cx="36" cy="35" r="15" fill="#fff"/><circle cx="36" cy="35" r="12" fill="#4379e8"/></svg></button>
    <button class="run" aria-label="Messages"><svg width="72" height="72" viewBox="0 0 72 72"><rect width="72" height="72" rx="16" fill="url(#gGreen)"/><path d="M36 12c15 0 26 9 26 22S51 56 36 56q-4 0-8-1-3 4-10 5 4-4 3-8-11-6-11-18c0-13 11-22 26-22z" fill="url(#gWhite)"/></svg><span class="nbadge">3</span></button>
    <button aria-label="Mail"><svg width="72" height="72" viewBox="0 0 72 72"><rect width="72" height="72" rx="16" fill="url(#gMail)"/><rect x="10" y="20" width="52" height="33" rx="4" fill="url(#gWhite)"/><path d="M11 22l21 19q4 3 8 0l21-19M11 52l17-15M61 52L44 37" fill="none" stroke="#aaa" stroke-width="1.500"/></svg></button>
    <button class="run" aria-label="Maps"><svg width="72" height="72" viewBox="0 0 72 72"><g clip-path="url(#tile)"><path d="M0 0h72v72H0z" fill="#f1f1ef"/><path d="M36 0h36v56L44 22z" fill="#6cd06a"/><path d="M0 18l20 20v34H0z" fill="#d97fc4"/><path d="M2 0h18v16z" fill="#6cd06a"/><path d="M34 54l10-4 24 22H34z" fill="#f5c83f"/><path d="M18 0h18v40H18z" fill="#2e6fe8"/><path d="M48 0q2 22 24 26" fill="none" stroke="#e8e8e8" stroke-width="8"/></g><circle cx="27" cy="45" r="19" fill="#fff"/><circle cx="27" cy="45" r="16" fill="#2f77f0"/><path d="M27 33l8 21-8-5-8 5z" fill="#fff"/></svg></button>
    <button aria-label="Photos"><svg width="72" height="72" viewBox="0 0 72 72"><rect width="72" height="72" rx="16" fill="#fdfdfd"/><g opacity=".85"><ellipse cx="36" cy="20" rx="9" ry="15" fill="#f59a3a"/><ellipse cx="36" cy="20" rx="9" ry="15" fill="#e9d544" transform="rotate(45 36 36)"/><ellipse cx="36" cy="20" rx="9" ry="15" fill="#b5cc4a" transform="rotate(90 36 36)"/><ellipse cx="36" cy="20" rx="9" ry="15" fill="#6db883" transform="rotate(135 36 36)"/><ellipse cx="36" cy="20" rx="9" ry="15" fill="#6ba5dc" transform="rotate(180 36 36)"/><ellipse cx="36" cy="20" rx="9" ry="15" fill="#8a7fc8" transform="rotate(225 36 36)"/><ellipse cx="36" cy="20" rx="9" ry="15" fill="#c277a4" transform="rotate(270 36 36)"/><ellipse cx="36" cy="20" rx="9" ry="15" fill="#e9604c" transform="rotate(315 36 36)"/></g></svg></button>
    <button aria-label="FaceTime"><svg width="72" height="72" viewBox="0 0 72 72"><rect width="72" height="72" rx="16" fill="url(#gGreen)"/><rect x="11" y="20" width="34" height="32" rx="8" fill="url(#gWhite)"/><path d="M48 32l12-10q2 0 2 2v24q0 2-2 2L48 40z" fill="url(#gWhite)"/></svg></button>
    <button aria-label="Contacts"><svg width="72" height="72" viewBox="0 0 72 72"><rect x="66" y="12" width="9" height="14" rx="3" fill="#ccc"/><rect x="66" y="26" width="9" height="12" rx="2" fill="#5aaee0"/><rect x="66" y="38" width="9" height="12" rx="2" fill="#ee8e38"/><rect x="66" y="50" width="9" height="12" rx="3" fill="#63c55a"/><rect width="71" height="72" rx="14" fill="url(#gBrown)"/><circle cx="37" cy="36" r="22" fill="none" stroke="#7d5d33" stroke-width="2"/><circle cx="37" cy="31" r="8" fill="#7d5d33"/><path d="M22 51q5-9 15-9t15 9q-15 12-30 0z" fill="#7d5d33"/></svg></button>
    <button aria-label="Calendar"><svg width="72" height="72" viewBox="0 0 72 72"><g clip-path="url(#tile)"><path d="M0 0h72v72H0z" fill="#f9f9f8"/><path d="M0 0h72v23H0z" fill="#e0604f"/></g><text x="36" y="17" text-anchor="middle" font-family="Inter" font-weight="600" font-size="15" fill="#fff">JUL</text><text x="36" y="61" text-anchor="middle" font-family="Inter" font-weight="300" font-size="42" fill="#222">22</text></svg></button>
    <button aria-label="Reminders"><svg width="72" height="72" viewBox="0 0 72 72"><rect width="72" height="72" rx="16" fill="url(#gWhite)"/><g fill="none" stroke-width="1"><circle cx="14" cy="18" r="6" stroke="#2f77f0"/><circle cx="14" cy="36" r="6" stroke="#e0463a"/><circle cx="14" cy="54" r="6" stroke="#ee9a38"/></g><circle cx="14" cy="18" r="4" fill="#2f77f0"/><circle cx="14" cy="36" r="4" fill="#e0463a"/><circle cx="14" cy="54" r="4" fill="#ee9a38"/><path d="M27 18h38M27 36h38M27 54h38" stroke="#b8b8b8" stroke-width="2"/></svg></button>
    <button class="run" aria-label="Notes"><svg width="72" height="72" viewBox="0 0 72 72"><g clip-path="url(#tile)"><path d="M0 0h72v72H0z" fill="#f1f0ec"/><path d="M0 0h72v19H0z" fill="#f6d14b"/></g><path d="M0 22h72" stroke="#999" stroke-dasharray="1 2" stroke-width="2"/><path d="M0 37h72M0 55h72" stroke="#c9c8c4" stroke-width="1.500"/></svg></button>
    <button aria-label="Apple TV"><svg width="72" height="72" viewBox="0 0 72 72"><rect width="72" height="72" rx="16" fill="url(#gDark)"/><use href="#apple" x="7" y="21" width="26" height="26" fill="#fff"/><text x="32" y="46" font-family="Inter" font-weight="500" font-size="28" fill="#fff">tv</text></svg></button>
    <button class="run" aria-label="Music"><svg width="72" height="72" viewBox="0 0 72 72"><rect width="72" height="72" rx="16" fill="url(#gRed)"/><path d="M28 17l24-6v39a7 6 0 1 1-4-6V22l-16 4v28a7 6 0 1 1-4-6z" fill="#fff"/></svg></button>
    <button aria-label="Podcasts"><svg width="72" height="72" viewBox="0 0 72 72"><rect width="72" height="72" rx="16" fill="url(#gPurple)"/><g fill="none" stroke="#fff" stroke-width="3.500" stroke-linecap="round"><path d="M26 56a24 24 0 1 1 20 0M26 44a15 15 0 1 1 20 0"/></g><circle cx="36" cy="32" r="6" fill="#fff"/><path d="M36 41q6 0 6 5l-2 14q-1 4-4 4t-4-4l-2-14q0-5 6-5z" fill="#fff"/></svg></button>
    <button aria-label="Keynote"><svg width="72" height="72" viewBox="0 0 72 72"><rect width="72" height="72" rx="16" fill="url(#gBlue)"/><path d="M34 32h4v28h-4z" fill="#d5dbe3"/><path d="M25 59h23v3H25z" fill="#e8e8e8"/><path d="M18 11h36l4 19q0 3-3 3H17q-3 0-3-3z" fill="#f5f5f5"/><circle cx="36" cy="19" r="7" fill="#5ab0e8"/><path d="M36 12v7l-6 4q-4-9 6-11z" fill="#ee6a4c"/><path d="M36 19l3 6q-5 2-9-2z" fill="#f3c14a"/><path d="M20 28h32" stroke="#9aa6b5" stroke-width="2"/></svg></button>
    <button aria-label="Numbers"><svg width="72" height="72" viewBox="0 0 72 72"><rect width="72" height="72" rx="16" fill="url(#gGreen)"/><g fill="#fff"><rect x="13" y="46" width="9" height="15" rx="2"/><rect x="25" y="34" width="9" height="27" rx="2"/><rect x="38" y="10" width="9" height="51" rx="2"/><rect x="50" y="24" width="9" height="37" rx="2"/></g></svg></button>
    <button aria-label="Pages"><svg width="72" height="72" viewBox="0 0 72 72"><rect width="72" height="72" rx="16" fill="url(#gOrange)"/><path d="M13 60l4-11L54 13q5-2 5 2L22 54z" fill="#f5f5f5"/><path d="M34 34l5 4" stroke="#999" stroke-width="2"/><path d="M12 61h49" stroke="#f9d3a8" stroke-width="3"/></svg></button>
    <button aria-label="App Store"><svg width="72" height="72" viewBox="0 0 72 72"><rect width="72" height="72" rx="16" fill="url(#gBlue)"/><g stroke="#f6f8fb" stroke-width="6" stroke-linecap="round"><path d="M41 15L22 43M32 15l23 41M14 45h24M50 45h9M19 52l-2 4"/></g></svg></button>
    <button aria-label="System settings"><svg width="72" height="72" viewBox="0 0 72 72"><rect width="72" height="72" rx="16" fill="#b4b8b8"/><circle cx="36" cy="36" r="31" fill="#2c2c2c"/><circle cx="36" cy="36" r="27" fill="none" stroke="#999" stroke-width="4" stroke-dasharray="2 2"/><circle cx="36" cy="36" r="22" fill="none" stroke="#8a8a8a" stroke-width="4"/><circle cx="36" cy="36" r="7" fill="none" stroke="#8a8a8a" stroke-width="3"/><path d="M43 36h15M32 30L24 17M32 42l-8 13" stroke="#8a8a8a" stroke-width="4"/></svg></button>
    <span class="bar"></span>
    <button class="run" aria-label="PowerPoint"><svg width="72" height="72" viewBox="0 0 72 72"><rect width="72" height="72" rx="16" fill="#fff"/><circle cx="38" cy="36" r="24" fill="#e8744f"/><path d="M38 12a24 24 0 0 1 24 24H38z" fill="#f3a080"/><path d="M14 36h48a24 24 0 0 1-48 0z" fill="#c8502f"/><rect x="9" y="22" width="27" height="27" rx="3" fill="#b23c1d"/><text x="22" y="43" text-anchor="middle" font-family="Inter" font-weight="700" font-size="20" fill="#fff">P</text></svg></button>
    <button class="run" aria-label="Word"><svg width="72" height="72" viewBox="0 0 72 72"><rect width="72" height="72" rx="16" fill="#fff"/><path d="M20 12h40v12H20z" fill="#5ba1e8"/><path d="M20 24h40v12H20z" fill="#3a7bd0"/><path d="M20 36h40v12H20z" fill="#2c5cb8"/><path d="M20 48h40v12H20z" fill="#1d3f8c"/><rect x="7" y="22" width="27" height="27" rx="3" fill="#2450ae"/><text x="20" y="43" text-anchor="middle" font-family="Inter" font-weight="700" font-size="18" fill="#fff">W</text></svg></button>
    <button class="run" aria-label="Outlook"><svg width="72" height="72" viewBox="0 0 72 72"><rect width="72" height="72" rx="16" fill="#fff"/><path d="M20 12h38v18H20z" fill="#2260b0"/><path d="M32 18h26v18H32z" fill="#4fb4ee"/><path d="M46 18h12v10H46z" fill="#7fd4fb"/><path d="M20 34l20 12 20-12v26H20z" fill="#3f93dc"/><path d="M60 36v24L38 46z" fill="#6fb8ee"/><rect x="7" y="22" width="27" height="27" rx="3" fill="#2a6cc4"/><text x="20" y="43" text-anchor="middle" font-family="Inter" font-weight="700" font-size="19" fill="#fff">O</text></svg></button>
    <button class="run" aria-label="Webex"><svg width="72" height="72" viewBox="0 0 72 72"><rect width="72" height="72" rx="16" fill="#161616"/><g fill="none" stroke-width="10" stroke-linecap="round"><path d="M61 27q-3 27-15 27-6 0-9-10L32 28q-3-10-9-10" stroke="#3f7cf5"/><path d="M10 26q2 28 14 28 4 0 7-5" stroke="#4fc3ee"/><path d="M22 18q9 0 10 18 0 14-8 18" stroke="#3a62ee"/><path d="M39 34q2-16 10-16" stroke="#3f9be0"/><path d="M49 18q7 0 9 13" stroke="#5fe06a"/></g></svg></button>
    <button class="run" aria-label="Excel"><svg width="72" height="72" viewBox="0 0 72 72"><rect width="72" height="72" rx="16" fill="#fff"/><path d="M20 12h20v12H20z" fill="#3fa469"/><path d="M40 12h20v12H40z" fill="#60c48d"/><path d="M20 24h20v24H20z" fill="#2f8050"/><path d="M40 24h20v12H40z" fill="#3fa469"/><path d="M40 36h20v12H40z" fill="#2f8050"/><path d="M20 48h40v12H20z" fill="#2a5f3c"/><rect x="7" y="22" width="27" height="27" rx="3" fill="#287440"/><text x="20" y="43" text-anchor="middle" font-family="Inter" font-weight="700" font-size="20" fill="#fff">X</text></svg></button>
    <span class="bar"></span>
    <button aria-label="Downloads"><svg width="74" height="72" viewBox="0 8 74 72"><path d="M16 0h30l14 20v50H16z" fill="#e6e6e6"/><path d="M5 13h45v14H5z" fill="#f1f1f1"/><path d="M2 18h50l21 22v33H2z" fill="#f6f6f6"/><path d="M46 0l26 38-18 2-8-12z" fill="#fdfdfd" stroke="#ccc"/><g stroke="#999"><path d="M10 24h10M10 30h36M10 34h36M12 38h26"/><path d="M10 44h46M10 48h46M10 52h46M10 56h46M10 60h14M10 64h14M10 68h14M56 60h12M56 64h12M56 68h12M10 44v27M56 44v27" fill="none"/></g><text x="23" y="68" font-family="Liberation Sans" font-size="12" fill="#333">XLSX</text></svg></button>
    <button aria-label="Minimised window"><svg width="84" height="72" viewBox="0 0 84 72"><path d="M-6 3h84v66H-6z" fill="#f8f5ec"/><path d="M-6 3h84v5H-6z" fill="#f0f0f2"/><path d="M-6 8h22v61H-6z" fill="#e2e0ea"/><g transform="translate(48 48) scale(.38)"><rect width="72" height="72" rx="16" fill="#f1f1ef"/><path d="M36 0h20l16 20v36L44 22z" fill="#6cd06a"/><path d="M0 20l20 20v30H0z" fill="#d97fc4"/><path d="M18 0h18v40H18z" fill="#2e6fe8"/><circle cx="27" cy="45" r="19" fill="#fff"/><circle cx="27" cy="45" r="16" fill="#2f77f0"/><path d="M27 33l8 21-8-5-8 5z" fill="#fff"/></g></svg></button>
    <button aria-label="Trash"><svg width="72" height="72" viewBox="-6 8 72 72"><path d="M6 14l6-7 7-5 8 5 7-6 7 7 9 4-2 6H10z" fill="#e0e0e2" stroke="#aaa"/><path d="M15 13l5-5M26 8l4 5M37 6l6 7" stroke="#555" stroke-width="3"/><path d="M21 8l3 6" stroke="#3fa469" stroke-width="3"/><path d="M34 8l2 6" stroke="#d0803a" stroke-width="3"/><path d="M1 14q30 8 60 0l-7 62q-23 11-46 0z" fill="url(#gTrash)" opacity=".95"/><path d="M16 30l6 30M40 28l-5 34M28 40l4 24" stroke="#cfcfd2" stroke-width="3"/><ellipse cx="31" cy="13" rx="30" ry="4" fill="none" stroke="#eee" stroke-width="2"/></svg></button>
  </div>
</footer>

<aside class="shot" aria-label="Screen capture preview">
<svg width="288" height="180" viewBox="0 0 862 538" preserveAspectRatio="none" font-family="Inter" font-size="8" fill="#333">
<path d="M0 0h862v538H0z" fill="#fff"/><path d="M0 0h862v13H0z" fill="#2e0c9c"/><path d="M0 15h862v18H0z" fill="#387a48"/><path d="M0 33h862v64H0z" fill="#f2f2f2"/>
<g fill="#fff" font-weight="500"><text x="28" y="9">Excel&#160;&#160; File&#160;&#160;&#160; Edit&#160;&#160;&#160; View&#160;&#160;&#160; Insert&#160;&#160;&#160; Format&#160;&#160;&#160; Tools&#160;&#160;&#160; Data&#160;&#160;&#160; Window&#160;&#160;&#160; Help</text><text x="774" y="9">Sat 22 Jul 11:42 PM</text><text x="54" y="26" font-size="7">AutoSave</text><text x="357" y="27" font-size="9" font-weight="700">Practical Exercise - Financial Analysis</text></g>
<g><circle cx="10" cy="24" r="4" fill="#ec6a5e"/><circle cx="22" cy="24" r="4" fill="#f4bf4f"/><circle cx="34" cy="24" r="4" fill="#61c554"/></g>
<g fill="none" stroke="#dfeee3" stroke-width="1.500"><path d="M118 20h8v8h-8zM135 20h8v8h-8zM151 20h8v8h-8zM167 20q10 0 4 8"/><circle cx="828" cy="23" r="4"/><path d="M648 3l5 6M672 3v6M742 3l4 6"/></g>
<g font-weight="500"><text x="5" y="44">Home</text><text x="41" y="44">Insert</text><text x="79" y="44">Draw</text><text x="112" y="44">Page Layout</text><text x="172" y="44">Formulas</text><text x="222" y="44">Data</text><text x="254" y="44">Review</text><text x="295" y="44">View</text><text x="337" y="44">Tell me</text></g><path d="M5 49h22" stroke="#387a48" stroke-width="2"/>
<g fill="#fff" stroke="#ccc"><path d="M65 56h87v14H65zM154 56h33v14h-33zM432 56h94v14h-94zM752 36h40v13h-40zM797 36h60v13h-60z"/></g>
<g><text x="70" y="66" font-size="7">Calibri (Body)</text><text x="157" y="66" font-size="7">11</text><text x="364" y="66" font-size="7">Wrap Text</text><text x="364" y="85" font-size="7">Merge &amp; Center</text><text x="437" y="66" font-size="7">General</text><text x="664" y="63" font-size="7">Insert</text><text x="664" y="76" font-size="7">Delete</text><text x="664" y="89" font-size="7">Format</text><text x="764" y="45" fill="#387a48">Share</text><text x="810" y="45" fill="#387a48">Comments</text><text x="10" y="84" font-size="6">Paste</text><text x="540" y="83" font-size="6">Conditional</text><text x="580" y="83" font-size="6">Format</text><text x="614" y="83" font-size="6">Cell</text><text x="732" y="83" font-size="6">Sort &amp;</text><text x="762" y="83" font-size="6">Find &amp;</text><text x="800" y="83" font-size="6">Analyze</text></g>
<path d="M8 58h16v18H8z" fill="#f5dc98" stroke="#de8a41"/><path d="M17 63h9v13h-9z" fill="#fff" stroke="#333"/>
<g fill="#8fbce8" stroke="#555"><path d="M546 57h16v14h-16z" fill="#f09399"/><path d="M581 57h15v14h-15zM611 57h15v14h-15zM650 56h9v8h-9zM650 69h9v8h-9zM650 82h9v8h-9z"/><path d="M732 62h14l-6 12zM804 55h18v18h-18z" fill="#eee"/><circle cx="772" cy="63" r="7" fill="#fff"/></g>
<g stroke="#555" stroke-width="1.500" fill="none"><path d="M74 80v6M90 80v6M104 80v6M134 79h8v8h-8zM235 59h9M235 65h9M250 59h9M250 65h9M235 79h9M235 85h9M250 79h9M250 85h9M265 79h9M265 85h9M290 79h9M290 85h9M305 79h9M305 85h9"/><path d="M262 56h14v14h-14z" fill="#bbb"/></g><path d="M166 85h10" stroke="#fd3" stroke-width="3"/><path d="M188 85h10" stroke="#ea3323" stroke-width="3"/>
<path d="M0 97h862M0 112h862M0 126h862M47 97v15" stroke="#bbb" stroke-width="2"/><text x="5" y="107" font-size="7">G1</text><text x="94" y="108" font-style="italic">fx</text>
<path d="M12 126v346" stroke="#3b7549" stroke-width="2"/><path d="M5 132v340" stroke="#9bbfa5" stroke-width="4" stroke-dasharray="5 4"/>
<g font-size="6" fill="#666"><text x="26" y="121">A</text><text x="76" y="121">B</text><text x="140" y="121">C</text><text x="196" y="121">D</text><text x="240" y="121">E</text><text x="272" y="121">F</text><text x="304" y="121">G</text></g>
<path d="M320 113h130v13H320z" fill="#9bcbae"/><path d="M321 126h128v346H321z" fill="#c4c4c4" stroke="#4f8a5e"/><path d="M323 127h31v8h-31z" fill="#fff"/>
<path d="M466 120h396" stroke="#aaa" stroke-width="3" stroke-dasharray="3 29"/>
<g font-family="Lato" fill="#111"><text x="44" y="142" font-weight="700" font-size="7">Exercise 2</text><text x="48" y="160" font-size="7">Selected information from the financial statements of FEW Company appears below.</text><text x="48" y="169" font-size="7">Compute the percentage change in each of the items from Year 1 to Year 2, and compute</text><text x="48" y="178" font-size="7">the net income as a percentage of net sales in each year.</text><text x="48" y="196" font-size="7">Note: The analysis is about percentage change of the income statement elements.</text></g>
<path d="M44 234h183v36H44zM44 243h183M44 252h183M44 261h183M114 234v36M170 234v36" fill="none" stroke="#333" stroke-width="1.500"/>
<g font-family="Lato" font-size="7"><text x="132" y="241">Year 2</text><text x="188" y="241">Year 1</text><text x="48" y="251">Net sales</text><text x="130" y="251">$1,400,000</text><text x="187" y="251">$1,200,000</text><text x="48" y="260">Total expenses</text><text x="138" y="260">1,170,000</text><text x="195" y="260">1,000,000</text><text x="48" y="269">Net income</text><text x="142" y="269">$230,000</text><text x="202" y="269">200,000</text></g>
<path d="M0 472h862v15H0z" fill="#efefef"/><path d="M0 487h862v14H0z" fill="#cdcdcd"/><path d="M92 472h56v13H92z" fill="#fff"/>
<g font-size="7"><text x="45" y="482">Exercise 1</text><text x="100" y="482" fill="#387a48" font-weight="700">Exercise 2</text><text x="156" y="482">Exercise 3</text><text x="210" y="482">Exercise 4</text><text x="266" y="482">Exercises 5 &amp; 6</text><text x="336" y="482">Exercise 7</text><text x="392" y="482">Exercise 8</text><text x="447" y="482">Exercise 9</text><text x="502" y="482">Exrcises 10 &amp; 11</text><text x="580" y="482">Exercises 12-14</text><text x="656" y="482">Exercise 15</text><text x="714" y="482">Exercise 16</text><text x="772" y="482">Exercise 17</text><text x="12" y="497">Ready</text><text x="56" y="497">Accessibility: Good to go</text></g>
<path d="M0 501h862v37H0z" fill="#120236"/><rect x="20" y="503" width="820" height="33" rx="8" fill="#69548f"/><path d="M500 503h150v33H500z" fill="#8d56b4"/>
<g><rect x="25" y="508" width="21" height="21" rx="5" fill="#3f95f2"/><rect x="52" y="508" width="21" height="21" rx="5" fill="#c4c0d0"/><rect x="79" y="508" width="21" height="21" rx="5" fill="#4a9bea"/><rect x="107" y="508" width="21" height="21" rx="5" fill="#e8bd4c"/><rect x="134" y="508" width="21" height="21" rx="5" fill="#6cd962"/><rect x="162" y="508" width="21" height="21" rx="5" fill="#4597f0"/><rect x="189" y="508" width="21" height="21" rx="5" fill="#8fc6a0"/><rect x="216" y="508" width="21" height="21" rx="5" fill="#fff"/><circle cx="226" cy="518" r="7" fill="#e8744f"/><rect x="244" y="508" width="21" height="21" rx="5" fill="#6cd962"/><rect x="271" y="508" width="21" height="21" rx="5" fill="#9d7948"/><rect x="298" y="508" width="21" height="21" rx="5" fill="#f3dcd8"/><rect x="326" y="508" width="21" height="21" rx="5" fill="#fff"/><rect x="353" y="508" width="21" height="21" rx="5" fill="#f5e5a4"/><rect x="380" y="508" width="21" height="21" rx="5" fill="#1b2220"/><rect x="408" y="508" width="21" height="21" rx="5" fill="#e8505c"/><rect x="435" y="508" width="21" height="21" rx="5" fill="#9a4ad0"/><rect x="463" y="508" width="21" height="21" rx="5" fill="#459af2"/><rect x="490" y="508" width="21" height="21" rx="5" fill="#7ce06c"/><rect x="517" y="508" width="21" height="21" rx="5" fill="#f1a344"/><rect x="545" y="508" width="21" height="21" rx="5" fill="#4597f0"/><circle cx="582" cy="518" r="10" fill="#444"/><rect x="611" y="508" width="21" height="21" rx="5" fill="#fff"/><circle cx="621" cy="518" r="7" fill="#c8502f"/><rect x="638" y="508" width="21" height="21" rx="5" fill="#fff"/><path d="M642 511h13v14h-13z" fill="#2c5cb8"/><rect x="665" y="508" width="21" height="21" rx="5" fill="#fff"/><path d="M669 511h13v14h-13z" fill="#3f93dc"/><rect x="692" y="508" width="21" height="21" rx="5" fill="#161616"/><rect x="720" y="508" width="21" height="21" rx="5" fill="#fff"/><path d="M724 511h13v14h-13z" fill="#2f8050"/><path d="M760 506h14l8 10v14h-22zM787 508h23v19h-23zM818 508h16l-2 22h-12z" fill="#e8e8e8"/></g>
<path d="M0 0h862v538H0z" fill="none" stroke="#999" stroke-width="3"/>
</svg>
</aside>
</body>
</html>
